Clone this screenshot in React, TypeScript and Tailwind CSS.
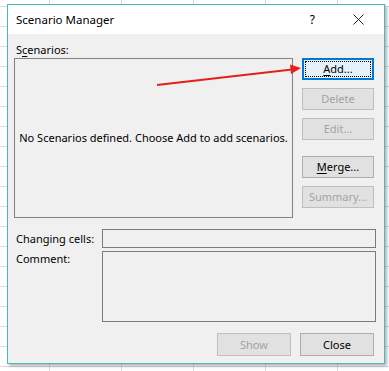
const font = { fontFamily: '"Noto Sans", "Open Sans", sans-serif' };

const Btn = ({
  children,
  disabled,
  focused,
  className = "",
}: {
  children: React.ReactNode;
  disabled?: boolean;
  focused?: boolean;
  className?: string;
}) => {
  if (focused) {
    return (
      <div
        className={`relative flex items-center justify-center border-2 border-[#0078d7] bg-[#e5f1fb] text-black ${className}`}
      >
        <div className="absolute inset-[1px] border border-dotted border-black"></div>
        <span>{children}</span>
      </div>
    );
  }
  return (
    <div
      className={`flex items-center justify-center border ${
        disabled
          ? "border-[#bfbfbf] bg-[#e1e1e1] text-[#a3a3a3]"
          : "border-[#adadad] bg-[#e1e1e1] text-black"
      } ${className}`}
    >
      {children}
    </div>
  );
};

const App = () => {
  return (
    <div
      className="relative h-[371px] w-[389px] overflow-hidden whitespace-nowrap bg-white pl-[7px] pt-[4px] text-[11px] leading-[16px] text-black [background-image:linear-gradient(to_right,#dadada_1px,transparent_1px),linear-gradient(to_bottom,#dadada_1px,transparent_1px)] [background-position:49px_6px] [background-size:72px_20px]"
      style={font}
    >
      <div className="flex h-[360px] w-[378px] flex-col border border-[#47b9c2] bg-[#f0f0f0] shadow-[2px_2px_3px_rgba(0,0,0,0.3)]">
        {/* title bar */}
        <div className="flex h-[29px] items-center bg-white pl-[8px]">
          <span className="text-[11.5px]">Scenario Manager</span>
          <span className="ml-auto mr-[38px] text-[12px]">?</span>
          <svg width="11" height="11" viewBox="0 0 11 11" className="mr-[20px]">
            <path d="M0.5 0.5 L10.5 10.5 M10.5 0.5 L0.5 10.5" stroke="#222" strokeWidth="1" />
          </svg>
        </div>

        {/* body */}
        <div className="flex flex-col pl-[6px] pt-[8px]">
          <div className="h-[16px] pl-[2px]">
            S<u className="underline-offset-2">c</u>enarios:
          </div>
          <div className="flex gap-[9px]">
            <div className="flex h-[160px] w-[279px] items-center justify-center border border-[#828282] bg-[#f0f0f0]">
              No Scenarios defined. Choose Add to add scenarios.
            </div>
            <div className="flex w-[72px] flex-col">
              <Btn focused className="h-[22px]">
                <u className="underline-offset-2">A</u>dd...
              </Btn>
              <Btn disabled className="mt-[8px] h-[22px]">
                Delete
              </Btn>
              <Btn disabled className="mt-[8px] h-[22px]">
                Edit...
              </Btn>
              <Btn className="mt-[16px] h-[22px]">
                <u className="underline-offset-2">M</u>erge...
              </Btn>
              <Btn disabled className="mt-[8px] h-[22px]">
                Summary...
              </Btn>
            </div>
          </div>

          <div className="mt-[11px] flex items-center">
            <div className="w-[88px] pl-[2px]">Changing cells:</div>
            <div className="h-[19px] w-[274px] border border-[#7a7a7a] bg-[#f0f0f0]"></div>
          </div>
          <div className="mt-[3px] flex items-start">
            <div className="w-[88px] pl-[2px]">Comment:</div>
            <div className="h-[71px] w-[274px] border border-[#7a7a7a] bg-[#f0f0f0]"></div>
          </div>

          <div className="mt-[11px] flex justify-end gap-[9px] pr-[10px]">
            <Btn disabled className="h-[23px] w-[74px]">
              Show
            </Btn>
            <Btn className="h-[23px] w-[74px]">Close</Btn>
          </div>
        </div>
      </div>

      {/* red annotation arrow */}
      <svg
        className="pointer-events-none absolute left-0 top-0"
        width="389"
        height="371"
        viewBox="0 0 389 371"
      >
        <line x1="157" y1="85" x2="292" y2="69.5" stroke="#e3201b" strokeWidth="2" />
        <polygon points="301,68 290,64.5 291,74" fill="#e3201b" />
      </svg>
    </div>
  );
};

export default App;
